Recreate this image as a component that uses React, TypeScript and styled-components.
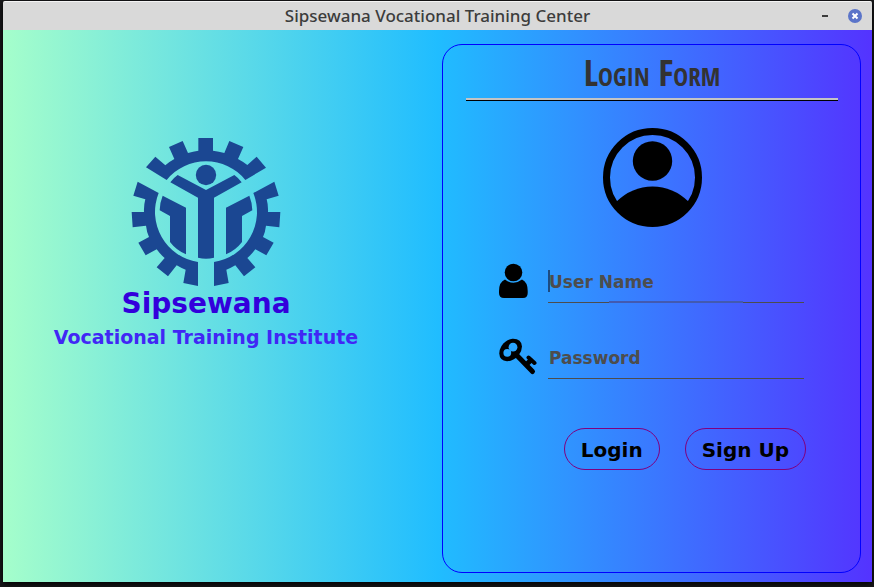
import React from "react";
import styled, { createGlobalStyle } from "styled-components";

const GlobalStyle = createGlobalStyle`
  * { box-sizing: border-box; }
  body { margin: 0; background: #18181a; }
`;

const Desktop = styled.div`
  display: flex;
  min-height: 100vh;
  padding: 1px 2px 5px 3px;
`;

const Window = styled.div`
  flex: 1;
  display: flex;
  flex-direction: column;
  box-shadow: 0 2px 6px #000;
`;

const TitleBar = styled.header`
  display: grid;
  grid-template-columns: 1fr auto 1fr;
  align-items: center;
  height: 29px;
  padding: 0 10px;
  background: #d9d9d9;
  border-top: 1px solid #f4f4f4;
  border-radius: 2px 2px 0 0;
`;

const WindowTitle = styled.h1`
  grid-column: 2;
  margin: 0;
  font: 500 17px/28px "Noto Sans", sans-serif;
  color: #3c3c3c;
`;

const WindowControls = styled.div`
  display: flex;
  justify-content: flex-end;
  gap: 16px;
`;

const ControlButton = styled.button`
  display: flex;
  width: 14px;
  height: 14px;
  padding: 0;
  border: 0;
  background: none;
`;

const Content = styled.main`
  flex: 1;
  display: grid;
  grid-template-columns: 439fr 419fr;
  padding: 14px 11px 9px 0;
  background: linear-gradient(to right, #a5fecb, #20bdff 50%, #5433ff);
`;

const Brand = styled.section`
  display: flex;
  flex-direction: column;
  align-items: center;
  padding: 94px 33px 0 0;
  font-family: "DejaVu Sans", sans-serif;
  font-weight: bold;
  white-space: nowrap;
`;

const BrandName = styled.h2`
  margin: 0;
  font-size: 28px;
  line-height: 36px;
  color: #3300dc;
`;

const BrandTagline = styled.p`
  margin: 0;
  font-size: 19px;
  line-height: 30px;
  color: #4127f5;
`;

const LoginPanel = styled.section`
  display: flex;
  flex-direction: column;
  align-items: center;
  padding: 0 22px 0 23px;
  border: 1px solid #0000ff;
  border-radius: 20px;
`;

const PanelHeading = styled.h2`
  align-self: stretch;
  margin: 0 0 27px;
  padding: 2px 0;
  border-bottom: 1px solid #000;
  box-shadow: inset 0 -2px #c4c4c4;
  font: bold 36px/51px "Open Sans Condensed", "Open Sans", sans-serif;
  font-variant: small-caps;
  text-align: center;
  color: #333;
`;

const Form = styled.form`
  display: flex;
  flex-direction: column;
  gap: 35px;
  width: 100%;
  max-width: 308px;
  margin-top: 35px;
  font-family: "DejaVu Sans", sans-serif;
`;

const Field = styled.div`
  display: grid;
  grid-template-columns: 50px 1fr;
  height: 41px;
  padding-right: 2px;
`;

const FieldLabel = styled.label`
  display: block;
  padding-left: 1px;
`;

const InputWrap = styled.div`
  position: relative;
`;

const TextInput = styled.input`
  width: 100%;
  height: 41px;
  padding: 0 1px;
  border: 0;
  border-bottom: 1px solid #4d4d4d;
  outline: 0;
  background: none;
  font: bold 17px "DejaVu Sans", sans-serif;
  color: #222;
  &::placeholder { color: #4d4d4d; opacity: 1; }
`;

const Caret = styled.span`
  position: absolute;
  left: 0;
  top: 8px;
  width: 2px;
  height: 22px;
  background: #1d4b80;
`;

const FocusLine = styled.span`
  position: absolute;
  left: 24%;
  bottom: 0;
  width: 52%;
  height: 2px;
  background: #435ab0;
`;

const Actions = styled.div`
  display: flex;
  justify-content: flex-end;
  gap: 25px;
  margin-top: 14px;
`;

const PillButton = styled.button`
  height: 42px;
  padding: 2px 16px 0;
  border: 1px solid #800080;
  border-radius: 21px;
  background: none;
  font: bold 20px "DejaVu Sans", sans-serif;
  color: #000;
`;

const GearHalf = () => (
  <>
    <path d="M463 155 476 197 440 208Q445 226 444 246L481 246 478 292 438 287Q436 305 429 321L461 338 439 376 406 358Q395 373 382 384L406 412 372 439 346 406Q333 414 319 419L326 459 282 468V396A152 152 0 0 0 400 189Z" />
    <path d="M388 197 318 233V373Q347 361 366 336V258L397 241Q396 216 388 197Z" />
  </>
);

const Logo = () => (
  <svg width="150" height="148" viewBox="33 24 450 444" fill="#1b4792" role="img" aria-label="Sipsewana logo">
    <path d="M78 112 106 80 136 106Q148 95 163 87L147 51 188 33 204 69Q219 64 235 62V24H279V62Q297 64 313 69L328 33 370 51 354 87Q369 95 382 105L410 80 438 113 376 150A152 152 0 0 0 140 150Z" />
    <circle cx="258" cy="135" r="30.500" />
    <path d="M173 135 258 180 343 135Q356 144 365 157L282 203V383Q258 389 234 383V203L151 157Q160 144 173 135Z" />
    <GearHalf />
    <g transform="translate(516 0) scale(-1 1)">
      <GearHalf />
    </g>
  </svg>
);

const Avatar = () => (
  <svg width="99" height="99" viewBox="0 0 99 99" aria-hidden="true">
    <circle cx="49.500" cy="49.500" r="46" fill="none" stroke="#000" strokeWidth="7" />
    <circle cx="49.500" cy="33" r="19.700" />
    <path d="M13 74Q29 58.500 49.500 58.500T86 74A44 44 0 0 1 13 74Z" />
  </svg>
);

const PersonIcon = () => (
  <svg width="30" height="37" viewBox="0 0 30 37" aria-hidden="true">
    <circle cx="14.500" cy="10.500" r="8.800" />
    <path d="M6 17.500Q14.500 24 23 17.500Q28.700 20 28.700 29V31Q28.700 36 24 36H5Q0 36 0 31V29Q0 20 6 17.500Z" />
  </svg>
);

const KeyIcon = () => (
  <svg width="38" height="38" viewBox="0 0 38 38" aria-hidden="true">
    <mask id="key-hole">
      <rect width="38" height="38" fill="#fff" />
      <circle cx="8.300" cy="14.800" r="3.900" />
      <circle cx="14" cy="9.200" r="4.400" />
    </mask>
    <g mask="url(#key-hole)">
      <path d="M2.500 8Q7 1.500 13.500 .8Q22.500 .5 23 8.500Q23 13 19.500 17.500Q14 23.300 8 23.200Q.5 22.500 .3 15.500Q.3 11.500 2.500 8Z" />
      <path d="M17 16.500 33.500 33.500M31.500 22.500 27.500 26.500" fill="none" stroke="#000" strokeWidth="5" strokeLinecap="round" />
      <path d="M29.500 19.500 35.500 25" fill="none" stroke="#000" strokeWidth="4" strokeLinecap="round" />
    </g>
  </svg>
);

export default function App() {
  return (
    <>
      <GlobalStyle />
      <Desktop>
        <Window>
          <TitleBar>
            <WindowTitle>Sipsewana Vocational Training Center</WindowTitle>
            <WindowControls>
              <ControlButton aria-label="Minimize">
                <svg width="14" height="14" viewBox="0 0 14 14">
                  <path d="M4 6h6v2H4z" fill="#3c3c3c" />
                </svg>
              </ControlButton>
              <ControlButton aria-label="Close">
                <svg width="14" height="14" viewBox="0 0 14 14">
                  <circle cx="7" cy="7" r="7" fill="#5b74c9" />
                  <path d="M4.500 4.500l5 5m0-5l-5 5" stroke="#fff" strokeWidth="2" />
                </svg>
              </ControlButton>
            </WindowControls>
          </TitleBar>
          <Content>
            <Brand>
              <Logo />
              <BrandName>Sipsewana</BrandName>
              <BrandTagline>Vocational Training Institute</BrandTagline>
            </Brand>
            <LoginPanel>
              <PanelHeading>Login Form</PanelHeading>
              <Avatar />
              <Form onSubmit={(e: React.FormEvent) => e.preventDefault()}>
                <Field>
                  <FieldLabel htmlFor="username" aria-label="User Name"><PersonIcon /></FieldLabel>
                  <InputWrap>
                    <TextInput id="username" type="text" placeholder="User Name" />
                    <Caret />
                    <FocusLine />
                  </InputWrap>
                </Field>
                <Field>
                  <FieldLabel htmlFor="password" aria-label="Password"><KeyIcon /></FieldLabel>
                  <InputWrap>
                    <TextInput id="password" type="password" placeholder="Password" />
                  </InputWrap>
                </Field>
                <Actions>
                  <PillButton type="submit">Login</PillButton>
                  <PillButton type="button">Sign Up</PillButton>
                </Actions>
              </Form>
            </LoginPanel>
          </Content>
        </Window>
      </Desktop>
    </>
  );
}
